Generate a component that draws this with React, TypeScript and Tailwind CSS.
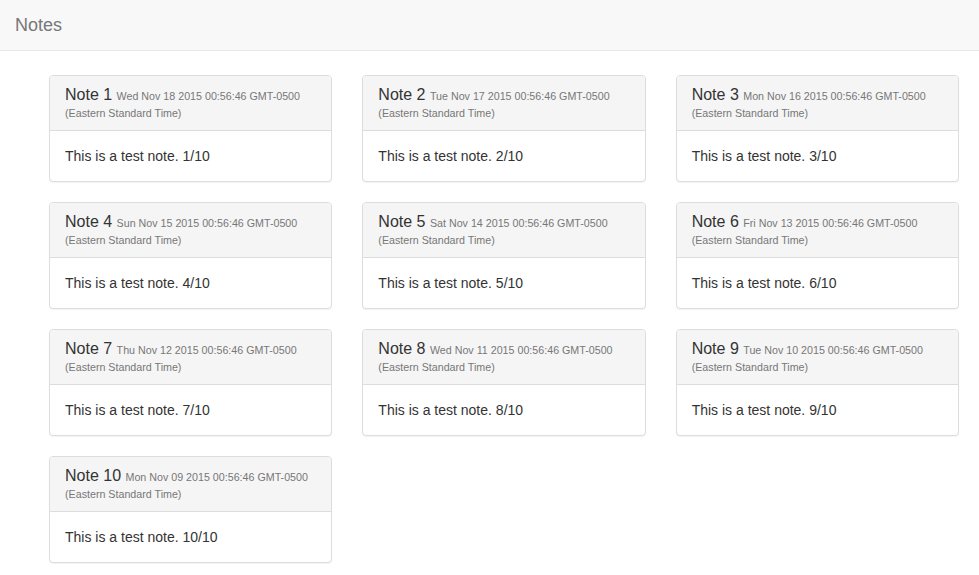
import React from "react";

type Note = {
  id: number;
  date: string;
};

const notes: Note[] = [
  { id: 1, date: "Wed Nov 18 2015" },
  { id: 2, date: "Tue Nov 17 2015" },
  { id: 3, date: "Mon Nov 16 2015" },
  { id: 4, date: "Sun Nov 15 2015" },
  { id: 5, date: "Sat Nov 14 2015" },
  { id: 6, date: "Fri Nov 13 2015" },
  { id: 7, date: "Thu Nov 12 2015" },
  { id: 8, date: "Wed Nov 11 2015" },
  { id: 9, date: "Tue Nov 10 2015" },
  { id: 10, date: "Mon Nov 09 2015" },
];

const NotePanel = ({ id, date }: Note) => {
  return (
    <div className="mb-[20px] rounded-[4px] border border-[#dddddd] bg-white shadow-[0_1px_1px_rgba(0,0,0,0.05)]">
      {/* heading */}
      <div className="rounded-t-[3px] border-b border-[#dddddd] bg-[#f5f5f5] px-[15px] py-[10px] text-[#333333]">
        <h3 className="text-[16px] leading-[17px] font-normal">
          Note {id}{" "}
          <small className="text-[10.7px] leading-none text-[#777777]">
            {date} 00:56:46 GMT-0500 (Eastern Standard Time)
          </small>
        </h3>
      </div>
      {/* body */}
      <div className="p-[15px] text-[14px] leading-[20px] text-[#333333]">
        This is a test note. {id}/10
      </div>
    </div>
  );
};

export default function App() {
  return (
    <div
      className="min-h-screen bg-white"
      style={{ fontFamily: '"Liberation Sans", Arial, Helvetica, sans-serif' }}
    >
      {/* navbar */}
      <nav className="h-[51px] border-b border-[#e7e7e7] bg-[#f8f8f8]">
        <div className="px-[15px] py-[15px] text-[18px] leading-[20px] text-[#777777]">
          Notes
        </div>
      </nav>

      <div className="ml-[49px] grid w-[910px] grid-cols-3 gap-x-[30px] pt-[24px]">
        {notes.map((n) => (
          <NotePanel key={n.id} {...n} />
        ))}
      </div>
    </div>
  );
}
